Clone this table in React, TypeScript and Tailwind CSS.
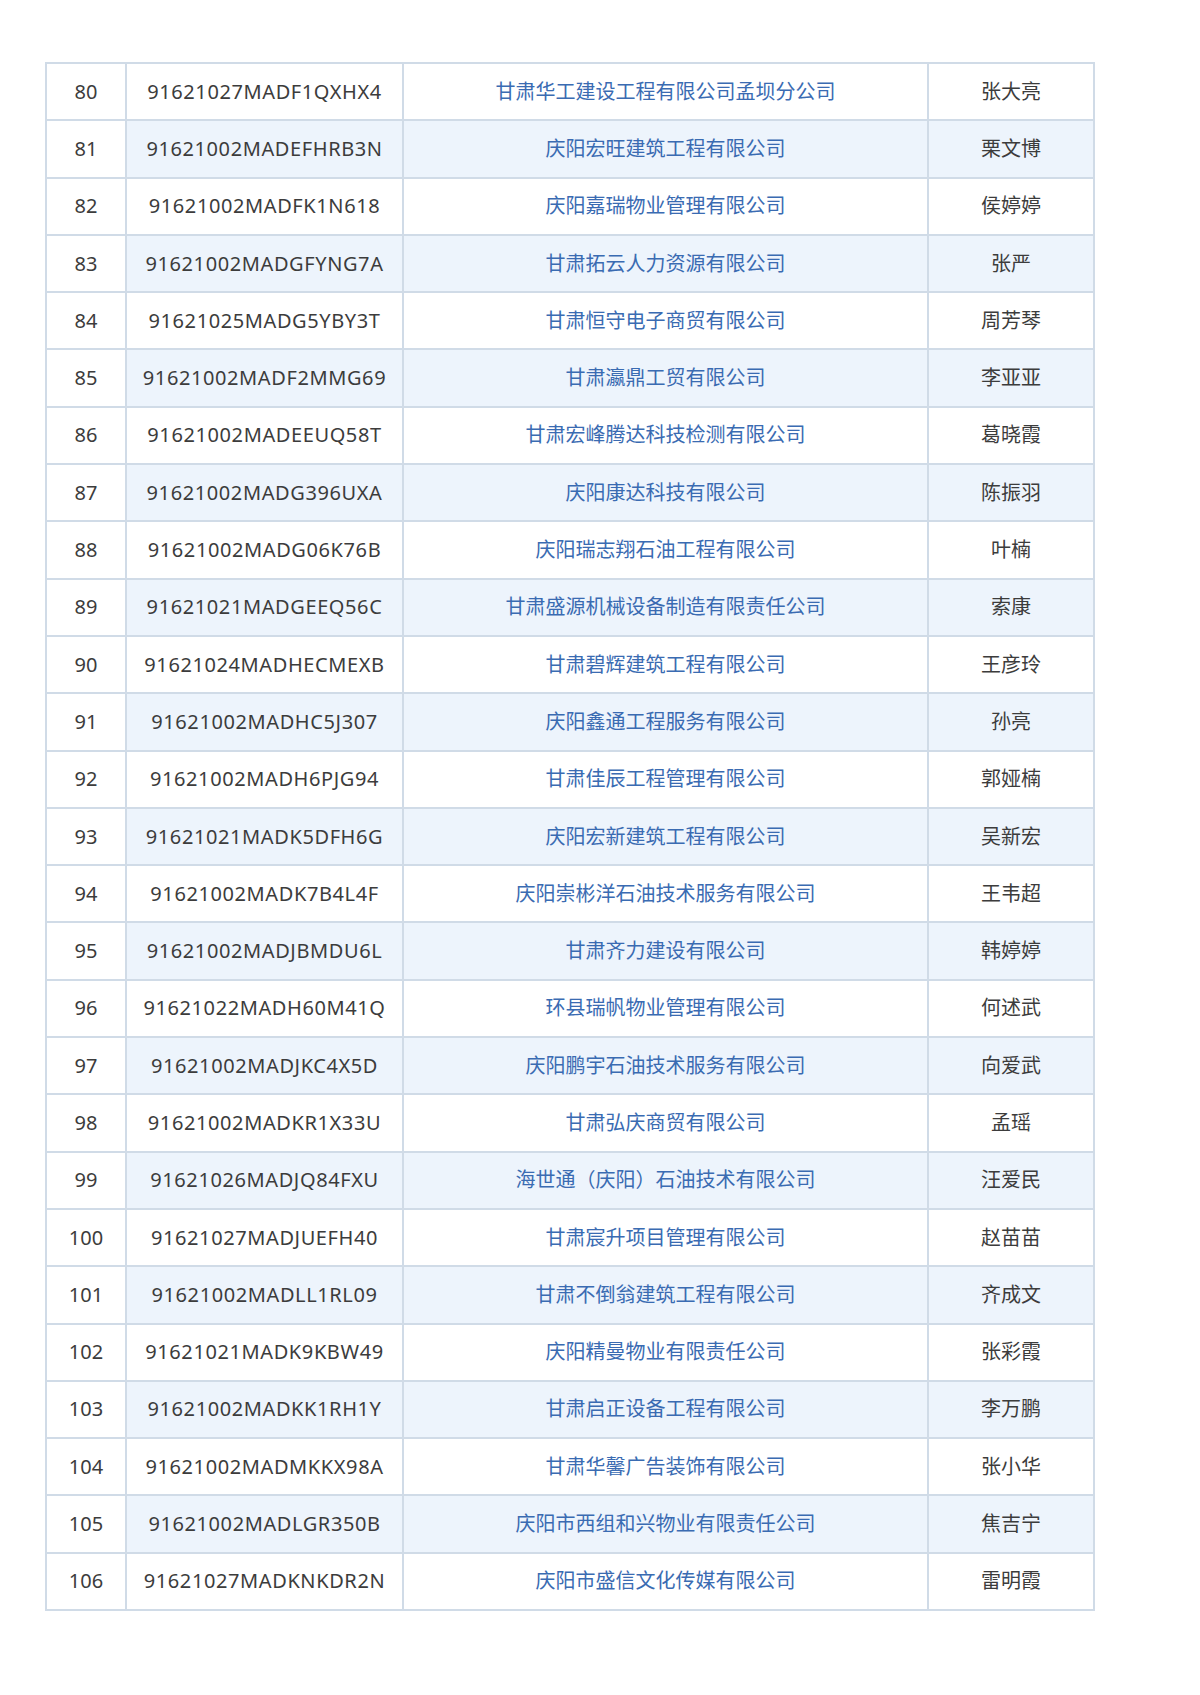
import React from "react";

const rows: [string, string, string, string][] = [
  ["80", "91621027MADF1QXHX4", "甘肃华工建设工程有限公司孟坝分公司", "张大亮"],
  ["81", "91621002MADEFHRB3N", "庆阳宏旺建筑工程有限公司", "栗文博"],
  ["82", "91621002MADFK1N618", "庆阳嘉瑞物业管理有限公司", "侯婷婷"],
  ["83", "91621002MADGFYNG7A", "甘肃拓云人力资源有限公司", "张严"],
  ["84", "91621025MADG5YBY3T", "甘肃恒守电子商贸有限公司", "周芳琴"],
  ["85", "91621002MADF2MMG69", "甘肃瀛鼎工贸有限公司", "李亚亚"],
  ["86", "91621002MADEEUQ58T", "甘肃宏峰腾达科技检测有限公司", "葛晓霞"],
  ["87", "91621002MADG396UXA", "庆阳康达科技有限公司", "陈振羽"],
  ["88", "91621002MADG06K76B", "庆阳瑞志翔石油工程有限公司", "叶楠"],
  ["89", "91621021MADGEEQ56C", "甘肃盛源机械设备制造有限责任公司", "索康"],
  ["90", "91621024MADHECMEXB", "甘肃碧辉建筑工程有限公司", "王彦玲"],
  ["91", "91621002MADHC5J307", "庆阳鑫通工程服务有限公司", "孙亮"],
  ["92", "91621002MADH6PJG94", "甘肃佳辰工程管理有限公司", "郭娅楠"],
  ["93", "91621021MADK5DFH6G", "庆阳宏新建筑工程有限公司", "吴新宏"],
  ["94", "91621002MADK7B4L4F", "庆阳崇彬洋石油技术服务有限公司", "王韦超"],
  ["95", "91621002MADJBMDU6L", "甘肃齐力建设有限公司", "韩婷婷"],
  ["96", "91621022MADH60M41Q", "环县瑞帆物业管理有限公司", "何述武"],
  ["97", "91621002MADJKC4X5D", "庆阳鹏宇石油技术服务有限公司", "向爱武"],
  ["98", "91621002MADKR1X33U", "甘肃弘庆商贸有限公司", "孟瑶"],
  ["99", "91621026MADJQ84FXU", "海世通（庆阳）石油技术有限公司", "汪爱民"],
  ["100", "91621027MADJUEFH40", "甘肃宸升项目管理有限公司", "赵苗苗"],
  ["101", "91621002MADLL1RL09", "甘肃不倒翁建筑工程有限公司", "齐成文"],
  ["102", "91621021MADK9KBW49", "庆阳精曼物业有限责任公司", "张彩霞"],
  ["103", "91621002MADKK1RH1Y", "甘肃启正设备工程有限公司", "李万鹏"],
  ["104", "91621002MADMKKX98A", "甘肃华馨广告装饰有限公司", "张小华"],
  ["105", "91621002MADLGR350B", "庆阳市西组和兴物业有限责任公司", "焦吉宁"],
  ["106", "91621027MADKNKDR2N", "庆阳市盛信文化传媒有限公司", "雷明霞"],
];

export default function App() {
  return (
    <div
      className="w-[1200px] h-[1695px] bg-white pt-[62px]"
      style={{ fontFamily: '"Noto Sans", "Noto Sans CJK SC", sans-serif' }}
    >
      <div className="ml-[45px] w-[1050px] border-2 border-[#d0dbe7]">
        {rows.map((r, i) => {
          const tint = i % 2 === 1;
          return (
            <div
              key={r[0]}
              className={
                "grid grid-cols-[78px_277px_525px_166px] h-[55.3px] " +
                (i > 0 ? "border-t-2 border-[#d0dbe7] box-content" : "")
              }
            >
              <div className="flex items-center justify-center bg-white text-[20px] text-[#3c3c3c]">
                {r[0]}
              </div>
              <div
                className={
                  "flex items-center justify-center border-l-2 border-[#d0dbe7] text-[20px] tracking-[0.6px] text-[#3c3c3c] " +
                  (tint ? "bg-[#edf4fc]" : "bg-white")
                }
              >
                {r[1]}
              </div>
              <div
                className={
                  "flex items-center justify-center border-l-2 border-[#d0dbe7] text-[20px] text-[#3a6bb2] " +
                  (tint ? "bg-[#edf4fc]" : "bg-white")
                }
              >
                {r[2]}
              </div>
              <div
                className={
                  "flex items-center justify-center border-l-2 border-[#d0dbe7] text-[20px] text-[#3c3c3c] " +
                  (tint ? "bg-[#edf4fc]" : "bg-white")
                }
              >
                {r[3]}
              </div>
            </div>
          );
        })}
      </div>
    </div>
  );
}
